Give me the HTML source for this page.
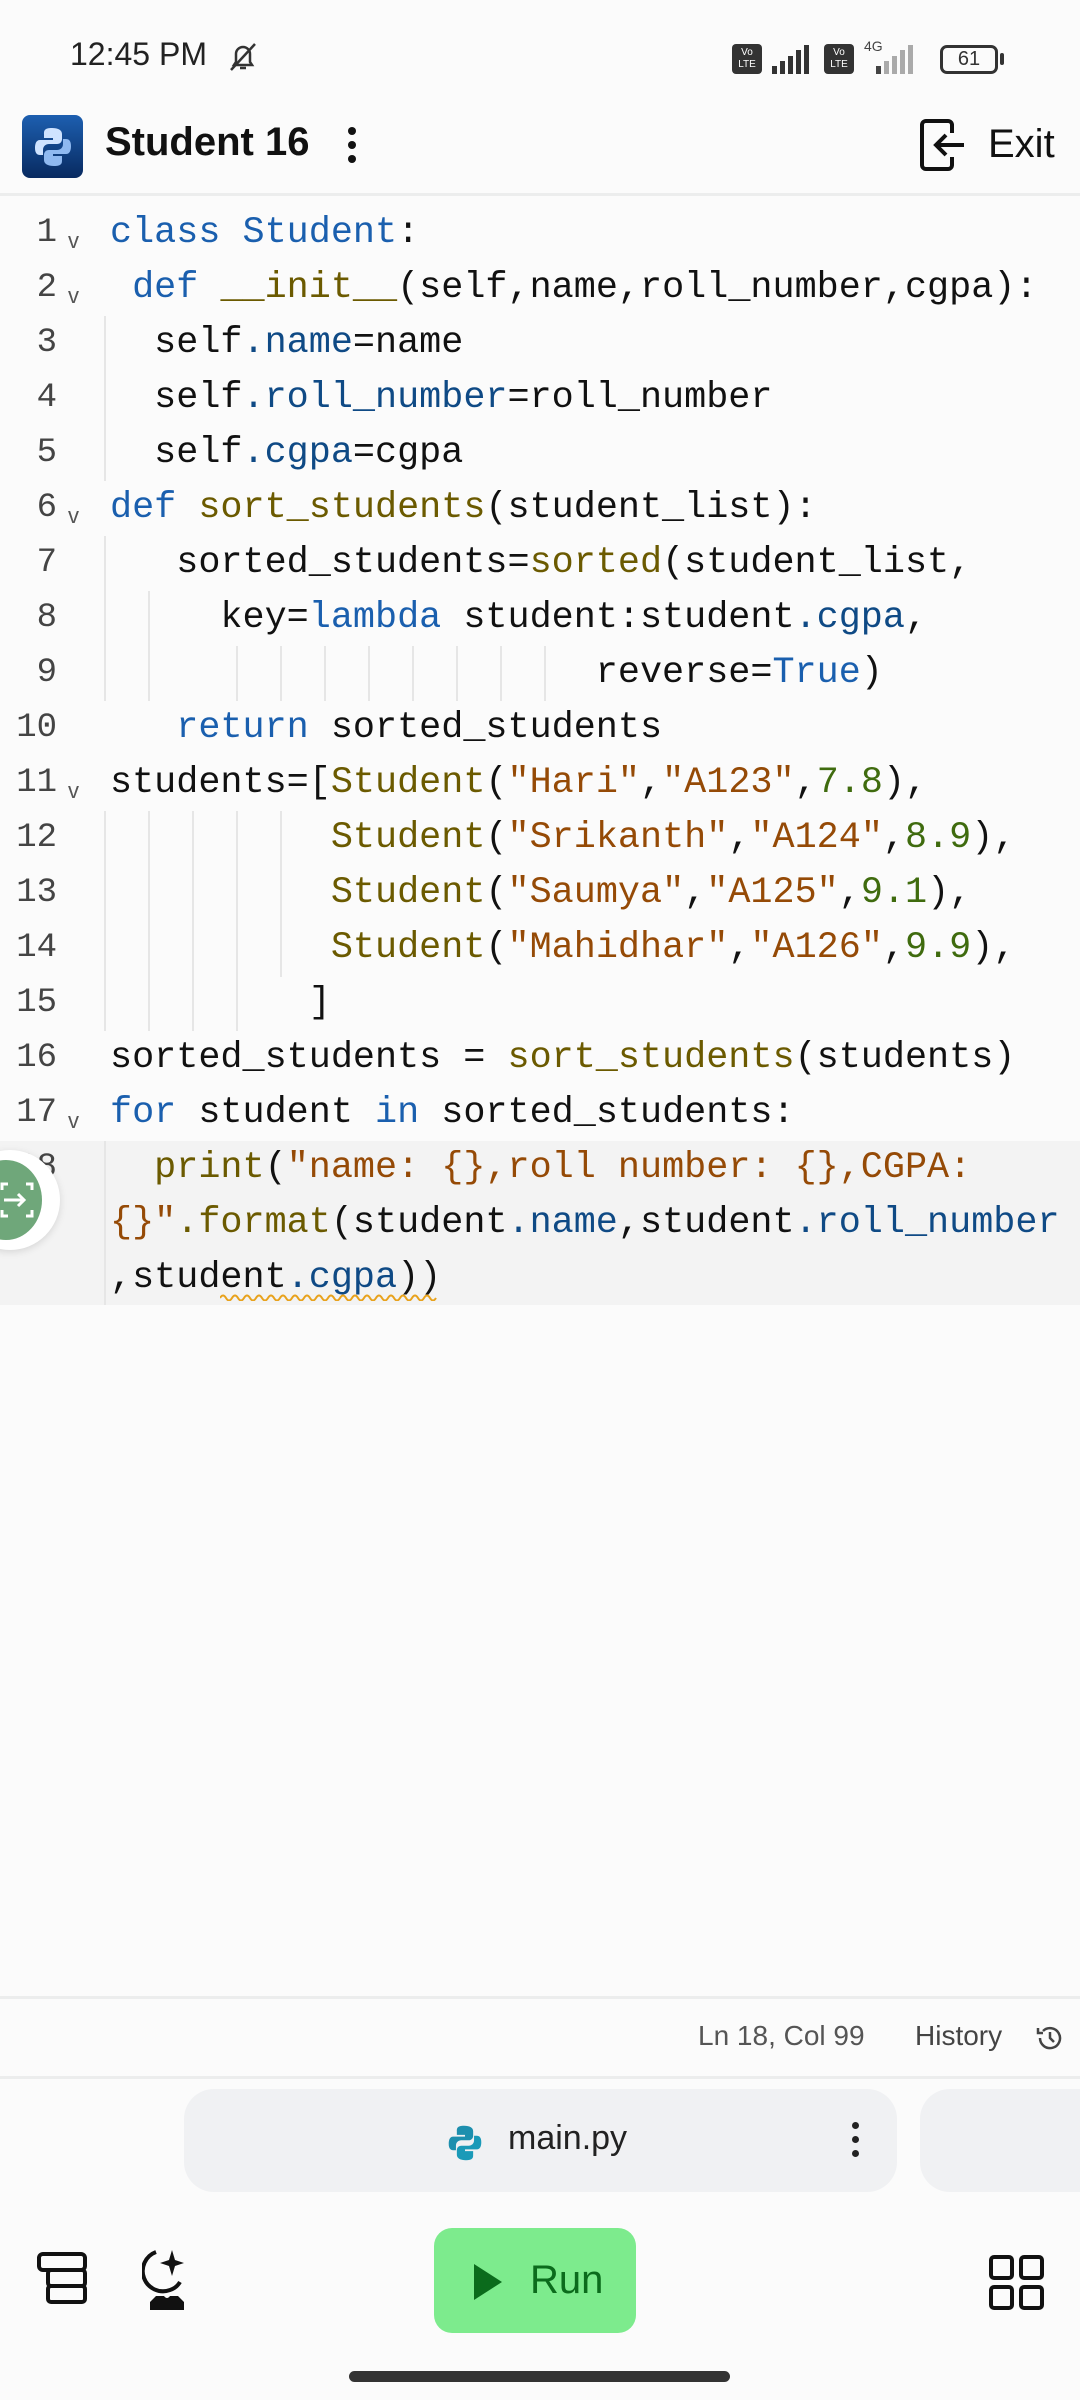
<!DOCTYPE html>
<html><head><meta charset="utf-8"><style>
*{margin:0;padding:0;box-sizing:border-box}
body{width:1080px;height:2400px;background:#fbfbfb;position:relative;overflow:hidden;font-family:"Liberation Sans",sans-serif;color:#111}
.abs{position:absolute}
.code{position:absolute;left:110px;font-family:"Liberation Mono",monospace;font-size:36.8px;white-space:pre;line-height:55px;color:#111}
.ln{position:absolute;width:57px;text-align:right;font-family:"Liberation Mono",monospace;font-size:34px;color:#444;line-height:55px}
.fold{position:absolute;left:68px;font-size:22px;color:#555;font-family:"Liberation Sans",sans-serif}
.k{color:#1a5fae}.f{color:#6b5a00}.p{color:#0f4a85}.s{color:#954a06}.n{color:#3f6b0e}
.g{position:absolute;width:2px;background:#e6e6e6}
</style></head><body>
<!-- status bar -->
<div class="abs" style="left:70px;top:36px;font-size:32px;color:#222">12:45 PM</div>
<svg class="abs" style="left:226px;top:40px" width="34" height="34" viewBox="0 0 34 34"><path d="M8 25 L10 22 V14 a7 7 0 0 1 14 0 V22 L26 25 Z M14 28 h6" fill="none" stroke="#333" stroke-width="2.5"/><path d="M5 30 L29 4" stroke="#333" stroke-width="2.5"/></svg>
<div class="abs" style="left:732px;top:44px;width:30px;height:30px;background:#333;border-radius:4px;color:#fff;font-size:10px;line-height:12px;text-align:center;padding-top:3px">Vo<br>LTE</div>
<svg class="abs" style="left:770px;top:44px" width="46" height="30"><rect x="2" y="22" width="5" height="8" fill="#333"/><rect x="10" y="17" width="5" height="13" fill="#333"/><rect x="18" y="12" width="5" height="18" fill="#333"/><rect x="26" y="6" width="5" height="24" fill="#333"/><rect x="34" y="1" width="5" height="29" fill="#333"/></svg>
<div class="abs" style="left:824px;top:44px;width:30px;height:30px;background:#333;border-radius:4px;color:#fff;font-size:10px;line-height:12px;text-align:center;padding-top:3px">Vo<br>LTE</div>
<div class="abs" style="left:864px;top:38px;font-size:14px;color:#444">4G</div>
<svg class="abs" style="left:862px;top:44px" width="60" height="30"><rect x="14" y="22" width="5" height="8" fill="#444"/><rect x="22" y="17" width="5" height="13" fill="#aaa"/><rect x="30" y="12" width="5" height="18" fill="#aaa"/><rect x="38" y="6" width="5" height="24" fill="#aaa"/><rect x="46" y="1" width="5" height="29" fill="#aaa"/></svg>
<div class="abs" style="left:940px;top:45px;width:58px;height:29px;border:3px solid #333;border-radius:7px;font-size:20px;color:#333;text-align:center;line-height:23px">61</div>
<div class="abs" style="left:1000px;top:53px;width:4px;height:12px;background:#333;border-radius:2px"></div>
<!-- header -->
<div class="abs" style="left:22px;top:115px;width:61px;height:63px;border-radius:8px;background:linear-gradient(#1d5fb0,#082a60)"></div>
<svg class="abs" style="left:32px;top:125px" width="42" height="44" viewBox="0 0 42 44"><path d="M20 3 C12 3 12 6 12 9 V13 H21 V15 H8 C4 15 3 19 3 23 C3 28 5 30 8 30 H11 V25 C11 21 14 19 17 19 H25 C28 19 30 17 30 14 V9 C30 5 26 3 20 3Z" fill="#cfe3ff"/><path d="M22 41 C30 41 30 38 30 35 V31 H21 V29 H34 C38 29 39 25 39 21 C39 16 37 14 34 14 H31 V19 C31 23 28 25 25 25 H17 C14 25 12 27 12 30 V35 C12 39 16 41 22 41Z" fill="#8fb9f0"/></svg>
<div class="abs" style="left:105px;top:120px;font-size:40px;font-weight:bold;color:#111">Student 16</div>
<div class="abs" style="left:348px;top:127px;width:8px;height:8px;border-radius:50%;background:#111;box-shadow:0 14px 0 #111,0 28px 0 #111"></div>
<svg class="abs" style="left:918px;top:117px" width="52" height="56" viewBox="0 0 52 56"><path d="M34 40 V48 a4 4 0 0 1 -4 4 H8 a4 4 0 0 1 -4 -4 V8 a4 4 0 0 1 4 -4 H30 a4 4 0 0 1 4 4 V16" fill="none" stroke="#111" stroke-width="4"/><path d="M46 28 H18 M28 18 L18 28 L28 38" fill="none" stroke="#111" stroke-width="4"/></svg>
<div class="abs" style="left:988px;top:122px;font-size:40px;color:#111">Exit</div>
<div class="abs" style="left:0;top:193px;width:1080px;height:3px;background:#eceded"></div>
<!-- line 18 highlight -->
<div class="abs" style="left:0;top:1141px;width:1080px;height:164px;background:#f3f3f3"></div>
<!-- guides -->
<div class="g" style="left:104px;top:316px;height:165px"></div>
<div class="g" style="left:104px;top:536px;height:165px"></div>
<div class="g" style="left:148px;top:591px;height:110px"></div>
<div class="g" style="left:104px;top:811px;height:220px"></div>
<div class="g" style="left:148px;top:811px;height:220px"></div>
<div class="g" style="left:192px;top:811px;height:220px"></div>
<div class="g" style="left:236px;top:811px;height:220px"></div>
<div class="g" style="left:280px;top:811px;height:166px"></div>
<div class="g" style="left:236px;top:646px;height:55px"></div>
<div class="g" style="left:280px;top:646px;height:55px"></div>
<div class="g" style="left:324px;top:646px;height:55px"></div>
<div class="g" style="left:368px;top:646px;height:55px"></div>
<div class="g" style="left:412px;top:646px;height:55px"></div>
<div class="g" style="left:456px;top:646px;height:55px"></div>
<div class="g" style="left:500px;top:646px;height:55px"></div>
<div class="g" style="left:544px;top:646px;height:55px"></div>
<div class="g" style="left:104px;top:1141px;height:164px"></div>
<!-- line numbers -->
<div class="ln" style="top:206px">1</div><div class="ln" style="top:261px">2</div><div class="ln" style="top:316px">3</div><div class="ln" style="top:371px">4</div><div class="ln" style="top:426px">5</div><div class="ln" style="top:481px">6</div><div class="ln" style="top:536px">7</div><div class="ln" style="top:591px">8</div><div class="ln" style="top:646px">9</div><div class="ln" style="top:701px">10</div><div class="ln" style="top:756px">11</div><div class="ln" style="top:811px">12</div><div class="ln" style="top:866px">13</div><div class="ln" style="top:921px">14</div><div class="ln" style="top:976px">15</div><div class="ln" style="top:1031px">16</div><div class="ln" style="top:1086px">17</div><div class="ln" style="top:1141px">18</div>
<div class="fold" style="top:228px">v</div><div class="fold" style="top:283px">v</div><div class="fold" style="top:503px">v</div><div class="fold" style="top:778px">v</div><div class="fold" style="top:1108px">v</div>
<!-- code -->
<div class="code" style="top:206px"><span class="k">class</span> <span class="k">Student</span>:</div>
<div class="code" style="top:261px"> <span class="k">def</span> <span class="f">__init__</span>(self,name,roll_number,cgpa):</div>
<div class="code" style="top:316px">  self<span class="p">.name</span>=name</div>
<div class="code" style="top:371px">  self<span class="p">.roll_number</span>=roll_number</div>
<div class="code" style="top:426px">  self<span class="p">.cgpa</span>=cgpa</div>
<div class="code" style="top:481px"><span class="k">def</span> <span class="f">sort_students</span>(student_list):</div>
<div class="code" style="top:536px">   sorted_students=<span class="f">sorted</span>(student_list,</div>
<div class="code" style="top:591px">     key=<span class="k">lambda</span> student:student<span class="p">.cgpa</span>,</div>
<div class="code" style="top:646px">                      reverse=<span class="k">True</span>)</div>
<div class="code" style="top:701px">   <span class="k">return</span> sorted_students</div>
<div class="code" style="top:756px">students=[<span class="f">Student</span>(<span class="s">"Hari"</span>,<span class="s">"A123"</span>,<span class="n">7.8</span>),</div>
<div class="code" style="top:811px">          <span class="f">Student</span>(<span class="s">"Srikanth"</span>,<span class="s">"A124"</span>,<span class="n">8.9</span>),</div>
<div class="code" style="top:866px">          <span class="f">Student</span>(<span class="s">"Saumya"</span>,<span class="s">"A125"</span>,<span class="n">9.1</span>),</div>
<div class="code" style="top:921px">          <span class="f">Student</span>(<span class="s">"Mahidhar"</span>,<span class="s">"A126"</span>,<span class="n">9.9</span>),</div>
<div class="code" style="top:976px">         ]</div>
<div class="code" style="top:1031px">sorted_students = <span class="f">sort_students</span>(students)</div>
<div class="code" style="top:1086px"><span class="k">for</span> student <span class="k">in</span> sorted_students:</div>
<div class="code" style="top:1141px">  <span class="f">print</span>(<span class="s">"name: {},roll number: {},CGPA:</span></div>
<div class="code" style="top:1196px"><span class="s">{}"</span><span class="f">.format</span>(student<span class="p">.name</span>,student<span class="p">.roll_number</span></div>
<div class="code" style="top:1251px">,student<span class="p">.cgpa</span>))</div>
<svg class="abs" style="left:220px;top:1293px" width="220" height="8"><path d="M0 5 q3 -5 6 0 t6 0 t6 0 t6 0 t6 0 t6 0 t6 0 t6 0 t6 0 t6 0 t6 0 t6 0 t6 0 t6 0 t6 0 t6 0 t6 0 t6 0 t6 0 t6 0 t6 0 t6 0 t6 0 t6 0 t6 0 t6 0 t6 0 t6 0 t6 0 t6 0 t6 0 t6 0 t6 0 t6 0 t6 0 t6 0" fill="none" stroke="#e8a21c" stroke-width="2"/></svg>
<!-- floating button -->
<div class="abs" style="left:-40px;top:1150px;width:100px;height:100px;border-radius:50%;background:#fff;box-shadow:0 2px 8px rgba(0,0,0,.12)"></div>
<div class="abs" style="left:-30px;top:1160px;width:72px;height:80px;border-radius:50%;background:#6fa77a"></div>
<svg class="abs" style="left:0;top:1180px" width="36" height="40"><path d="M2 10 V4 H8 M2 30 V36 H8 M26 4 H32 V10 M26 36 H32 V30 M4 20 H24 M18 14 L24 20 L18 26" fill="none" stroke="#fff" stroke-width="3"/></svg>
<!-- status row -->
<div class="abs" style="left:0;top:1996px;width:1080px;height:3px;background:#eceded"></div>
<div class="abs" style="left:698px;top:2020px;font-size:28px;color:#555">Ln 18, Col 99</div>
<div class="abs" style="left:915px;top:2020px;font-size:28px;color:#444">History</div>
<svg class="abs" style="left:1034px;top:2022px" width="32" height="32" viewBox="0 0 32 32"><path d="M6 16 a10 10 0 1 0 3 -7 M4 6 V11 H9 M16 10 V16 L20 20" fill="none" stroke="#444" stroke-width="2.5"/></svg>
<div class="abs" style="left:0;top:2076px;width:1080px;height:3px;background:#eceded"></div>
<!-- tabs -->
<div class="abs" style="left:184px;top:2089px;width:713px;height:103px;border-radius:30px;background:#f0f1f3"></div>
<div class="abs" style="left:920px;top:2089px;width:200px;height:103px;border-radius:30px;background:#f0f1f3"></div>
<svg class="abs" style="left:446px;top:2123px" width="38" height="40" viewBox="0 0 42 44"><path d="M20 3 C12 3 12 6 12 9 V13 H21 V15 H8 C4 15 3 19 3 23 C3 28 5 30 8 30 H11 V25 C11 21 14 19 17 19 H25 C28 19 30 17 30 14 V9 C30 5 26 3 20 3Z" fill="#1d8fae"/><path d="M22 41 C30 41 30 38 30 35 V31 H21 V29 H34 C38 29 39 25 39 21 C39 16 37 14 34 14 H31 V19 C31 23 28 25 25 25 H17 C14 25 12 27 12 30 V35 C12 39 16 41 22 41Z" fill="#1a9ab8"/></svg>
<div class="abs" style="left:508px;top:2119px;font-size:34px;color:#222">main.py</div>
<div class="abs" style="left:852px;top:2122px;width:7px;height:7px;border-radius:50%;background:#222;box-shadow:0 14px 0 #222,0 28px 0 #222"></div>
<!-- bottom bar -->
<svg class="abs" style="left:36px;top:2250px" width="56" height="56" viewBox="0 0 56 56"><rect x="3" y="4" width="46" height="16" rx="4" fill="none" stroke="#111" stroke-width="4"/><rect x="12" y="20" width="37" height="16" rx="3" fill="none" stroke="#111" stroke-width="4"/><rect x="12" y="36" width="37" height="16" rx="3" fill="none" stroke="#111" stroke-width="4"/></svg>
<svg class="abs" style="left:142px;top:2248px" width="50" height="62" viewBox="0 0 50 62"><path d="M14 4 A18 18 0 0 0 28 42 A18 18 0 0 0 38 34" fill="none" stroke="#111" stroke-width="4"/><path d="M30 2 L33 12 L42 15 L33 18 L30 28 L27 18 L18 15 L27 12Z" fill="#111"/><path d="M8 62 V54 L14 48 H22 Q25 52 28 48 H36 L42 54 V62Z" fill="#111"/></svg>
<div class="abs" style="left:434px;top:2228px;width:202px;height:105px;border-radius:18px;background:#7deb8d"></div>
<svg class="abs" style="left:472px;top:2262px" width="34" height="40"><path d="M2 2 L30 20 L2 38Z" fill="#0b6b1c"/></svg>
<div class="abs" style="left:530px;top:2258px;font-size:40px;color:#0b6b1c">Run</div>
<svg class="abs" style="left:988px;top:2254px" width="58" height="58" viewBox="0 0 58 58"><rect x="3" y="3" width="21" height="21" rx="3" fill="none" stroke="#111" stroke-width="4"/><rect x="33" y="3" width="21" height="21" rx="3" fill="none" stroke="#111" stroke-width="4"/><rect x="3" y="33" width="21" height="21" rx="3" fill="none" stroke="#111" stroke-width="4"/><rect x="33" y="33" width="21" height="21" rx="3" fill="none" stroke="#111" stroke-width="4"/></svg>
<div class="abs" style="left:349px;top:2371px;width:381px;height:11px;border-radius:6px;background:#333"></div>
</body></html>
